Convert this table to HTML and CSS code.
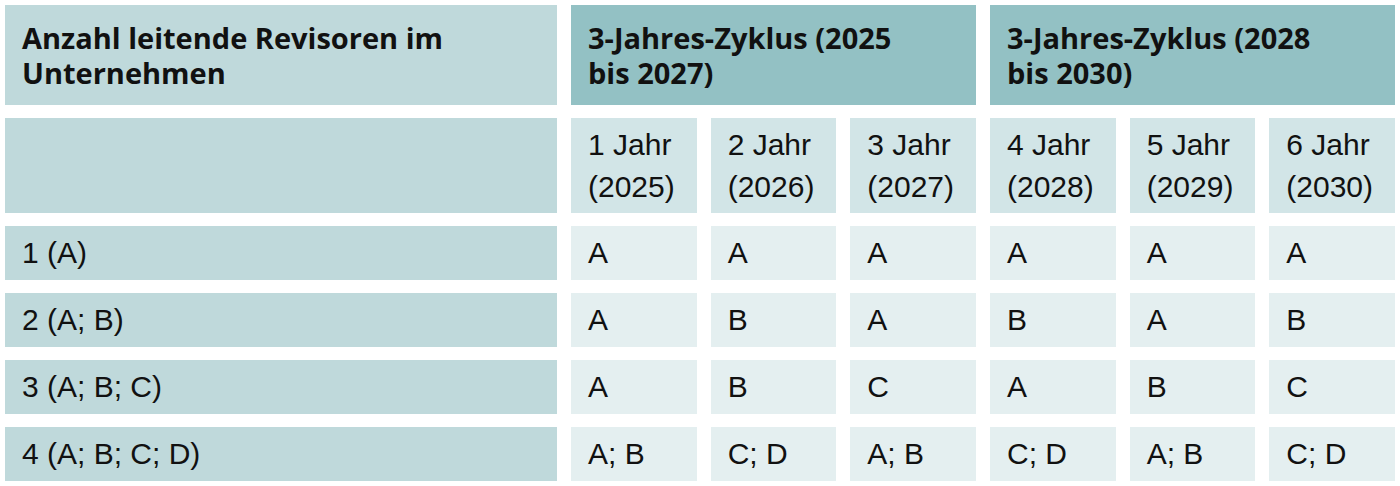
FILE: index.html
```html
<!DOCTYPE html>
<html lang="de">
<head>
<meta charset="utf-8">
<title>Rotation leitende Revisoren</title>
<link rel="stylesheet" href="styles.css">
</head>
<body>
<div class="table">
  <div class="cell head-first">Anzahl leitende Revisoren im Unternehmen</div>
  <div class="cell head-group">3-Jahres-Zyklus (2025 bis 2027)</div>
  <div class="cell head-group">3-Jahres-Zyklus (2028 bis 2030)</div>

  <div class="cell label"></div>
  <div class="cell year">1 Jahr<br>(2025)</div>
  <div class="cell year">2 Jahr<br>(2026)</div>
  <div class="cell year">3 Jahr<br>(2027)</div>
  <div class="cell year">4 Jahr<br>(2028)</div>
  <div class="cell year">5 Jahr<br>(2029)</div>
  <div class="cell year">6 Jahr<br>(2030)</div>

  <div class="cell label">1 (A)</div>
  <div class="cell data">A</div><div class="cell data">A</div><div class="cell data">A</div>
  <div class="cell data">A</div><div class="cell data">A</div><div class="cell data">A</div>

  <div class="cell label">2 (A; B)</div>
  <div class="cell data">A</div><div class="cell data">B</div><div class="cell data">A</div>
  <div class="cell data">B</div><div class="cell data">A</div><div class="cell data">B</div>

  <div class="cell label">3 (A; B; C)</div>
  <div class="cell data">A</div><div class="cell data">B</div><div class="cell data">C</div>
  <div class="cell data">A</div><div class="cell data">B</div><div class="cell data">C</div>

  <div class="cell label">4 (A; B; C; D)</div>
  <div class="cell data">A; B</div><div class="cell data">C; D</div><div class="cell data">A; B</div>
  <div class="cell data">C; D</div><div class="cell data">A; B</div><div class="cell data">C; D</div>
</div>
</body>
</html>
```

FILE: styles.css
```css
html, body {
  margin: 0;
  padding: 0;
  background: #ffffff;
}

.table {
  display: grid;
  width: 1390px;
  padding: 5px;
  grid-template-columns: 552px repeat(6, 1fr);
  grid-template-rows: 100px 95px repeat(4, 54px);
  column-gap: 14px;
  row-gap: 13px;
  font-family: "Liberation Sans", Arial, sans-serif;
  font-size: 30px;
  color: #111111;
}

.cell {
  display: flex;
  align-items: center;
  padding: 0 10px 0 17px;
  line-height: 42px;
}

.head-first,
.head-group {
  font-family: "Open Sans", "Lato", sans-serif;
  font-weight: 700;
  font-size: 29px;
  line-height: 35px;
}

.head-first {
  background: #bfd9db;
  padding-right: 16px;
}

.head-group {
  grid-column: span 3;
  background: #93c1c4;
  padding-right: 60px;
}

.label {
  background: #bfd9db;
}

.year {
  background: #d2e5e7;
}

.data {
  background: #e4eff0;
}
```
